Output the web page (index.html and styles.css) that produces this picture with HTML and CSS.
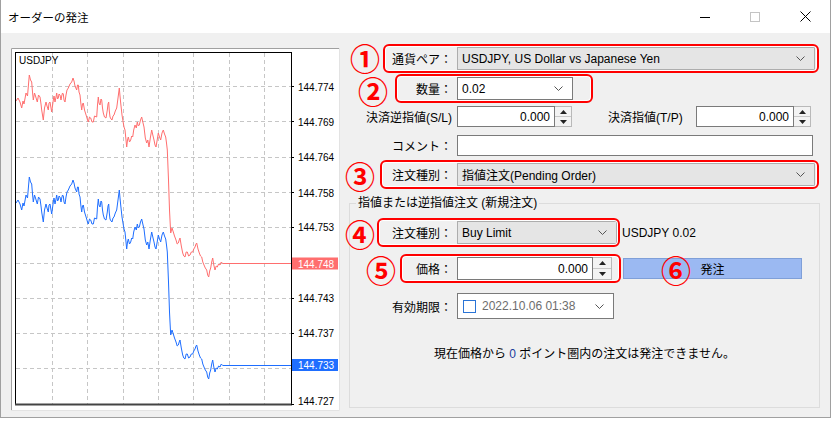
FILE: index.html
```html
<!DOCTYPE html>
<html lang="ja">
<head>
    <meta charset="UTF-8">
    <title>オーダーの発注</title>
    <link rel="stylesheet" href="styles.css">
</head>
<body>

<div class="window">
    <div class="titlebar">
        <span class="title">オーダーの発注</span>
        <div class="controls">
            <span class="ctl"><svg width="10" height="10"><line x1="0" y1="5.5" x2="10" y2="5.5" stroke="#000"/></svg></span>
            <span class="ctl"><svg width="10" height="10"><rect x="0.5" y="0.5" width="9" height="9" fill="none" stroke="#c4c4c4"/></svg></span>
            <span class="ctl"><svg width="11" height="11"><path d="M0.5 0.5 L10.5 10.5 M10.5 0.5 L0.5 10.5" stroke="#000" fill="none"/></svg></span>
        </div>
    </div>

    <div class="content">
        <!-- tick chart -->
        <div class="chart">
            <svg width="329" height="363" viewBox="11 48 329 363">
                <defs>
                    <polyline id="tick" fill="none" stroke-width="1" points="16,101 18,98 20,102 21.7,108 23,101 24,104 26,93 27.5,96 29.3,75 30.5,80 31.7,82 32.5,92 33.3,100 34.5,93 35.5,96 37.3,102 38.5,95 40,97 41,104 41.7,110 43.3,120 44.5,108 46,102 47,106 48.3,110 49,103 50,102 51,108 51.7,112 53.3,100 54,96 55,102 56,97 56.7,93 57.5,99 58.3,98 59,94 60,95 61,100 61.7,96 62.5,93 63.3,94 64,100 65,102 66,95 67,90 68.3,88 70,84 71.7,82 73,78 74,81 75,86 76.7,90 77.5,85 78.3,85 79,92 80,95 80.8,103 81.7,110 82.5,104 83.3,103 84.5,110 86.7,117 87.5,120 88.3,122 89.5,117 90.7,118 92,122 93.3,122 94.5,116 96.7,117 97.5,105 98.3,97 99,103 100,105 101,99 101.7,100 102.5,108 103.3,113 104.5,117 106,118 107.3,110 108,104 108.7,102 109.3,111 110,117 111,119 112,120 113,116 114,115 115.3,111 116.7,108 118,98 119.3,88 120,96 120.7,103 122,115 123.3,123 124,127 125,130 125.8,138 126.7,147 127.5,140 128.3,137 129.5,142 130.7,140 131.7,136 132.7,137 133.7,130 135,125 136.3,128 137.3,122 138.3,126 139.3,125 140.5,120 141.7,117 142.8,122 144,127 145.3,138 146.7,143 147.8,140 149,147 150.3,138 151.7,130 152.8,135 154,140 155,145 156,147 157.2,140 158.3,133 159.5,137 160.7,140 162,133 163.3,130 164.5,134 165.7,137 166.5,143 167.3,150 168.5,180 169.5,210 170,220 170.7,233 172,228 173.3,232 174.5,236 176,240 177.2,244 178.3,243 179.2,240 180,238 181.3,246 182.7,253 183.8,256 185,257 186.2,252 187.3,252 188.6,256 190,255 191.3,252 192.7,252 193.8,249 195,247 196,244 196.7,243 198,249 199.3,253 200.5,256 201.7,257 202.8,262 204,265 205.3,268 206.7,270 207.7,275 208.7,277 209.7,271 210.7,268 211.7,262 212.7,258 213.8,265 215,270 216.2,266 217.3,267 218.6,264 220,265 221.3,262 222.7,263.5 292,263.5"/>
                </defs>
                <rect x="11" y="48" width="329" height="363" fill="#fff"/>
                <path d="M11.5 411 V48.5 H340" stroke="#a0a0a0" fill="none"/>
                <path d="M339.5 48 V410.5 H11" stroke="#e3e3e3" fill="none"/>

                <g class="grid">
                    <line x1="52.5" y1="53" x2="52.5" y2="404"/>
                    <line x1="87.5" y1="53" x2="87.5" y2="404"/>
                    <line x1="123.5" y1="53" x2="123.5" y2="404"/>
                    <line x1="158.5" y1="53" x2="158.5" y2="404"/>
                    <line x1="193.5" y1="53" x2="193.5" y2="404"/>
                    <line x1="229.5" y1="53" x2="229.5" y2="404"/>
                    <line x1="264.5" y1="53" x2="264.5" y2="404"/>
                    <line x1="16" y1="86.5" x2="291" y2="86.5"/>
                    <line x1="16" y1="121.5" x2="291" y2="121.5"/>
                    <line x1="16" y1="157.5" x2="291" y2="157.5"/>
                    <line x1="16" y1="192.5" x2="291" y2="192.5"/>
                    <line x1="16" y1="227.5" x2="291" y2="227.5"/>
                    <line x1="16" y1="263.5" x2="291" y2="263.5"/>
                    <line x1="16" y1="298.5" x2="291" y2="298.5"/>
                    <line x1="16" y1="333.5" x2="291" y2="333.5"/>
                    <line x1="16" y1="368.5" x2="291" y2="368.5"/>
                </g>

                <use href="#tick" stroke="#ff6e6e"/>
                <use href="#tick" stroke="#1e6eff" transform="translate(0 102)"/>

                <rect x="15.5" y="52.5" width="276" height="352" fill="none" stroke="#000"/>
                <line x1="15" y1="404.5" x2="292" y2="404.5" stroke="#444" stroke-width="2"/>

                <g class="ticks">
                    <line x1="291" y1="86.5" x2="294" y2="86.5"/>
                    <line x1="291" y1="121.5" x2="294" y2="121.5"/>
                    <line x1="291" y1="157.5" x2="294" y2="157.5"/>
                    <line x1="291" y1="192.5" x2="294" y2="192.5"/>
                    <line x1="291" y1="227.5" x2="294" y2="227.5"/>
                    <line x1="291" y1="298.5" x2="294" y2="298.5"/>
                    <line x1="291" y1="333.5" x2="294" y2="333.5"/>
                    <line x1="291" y1="404.5" x2="294" y2="404.5"/>
                </g>

                <g class="axis">
                    <text x="19" y="64">USDJPY</text>
                    <text x="298" y="90.5">144.774</text>
                    <text x="298" y="125.5">144.769</text>
                    <text x="298" y="161">144.764</text>
                    <text x="298" y="196.5">144.758</text>
                    <text x="298" y="231">144.753</text>
                    <text x="298" y="302">144.743</text>
                    <text x="298" y="337">144.737</text>
                    <text x="298" y="405">144.727</text>
                </g>

                <rect x="292" y="257.5" width="46" height="12" fill="#ff6e6e"/>
                <text class="price-tag" x="298" y="267.5">144.748</text>
                <rect x="292" y="359" width="46" height="12" fill="#1e6eff"/>
                <text class="price-tag" x="298" y="369">144.733</text>
            </svg>
        </div>

        <!-- order form -->
        <div class="form">
            <div class="row row-1">
                <span class="label">通貨ペア：</span>
                <div class="combo combo-long">
                    <span>USDJPY, US Dollar vs Japanese Yen</span>
                    <svg class="chev" width="9" height="5"><polyline points="0.5,0.5 4.5,4.5 8.5,0.5" fill="none" stroke="#555"/></svg>
                </div>
                <span class="mark mark-1"></span>
                <span class="num num-1">①</span>
            </div>

            <div class="row row-2">
                <span class="label">数量：</span>
                <div class="combo combo-edit">
                    <span>0.02</span>
                    <svg class="chev" width="9" height="5"><polyline points="0.5,0.5 4.5,4.5 8.5,0.5" fill="none" stroke="#555"/></svg>
                </div>
                <span class="mark mark-2"></span>
                <span class="num num-2">②</span>
            </div>

            <div class="row row-3">
                <span class="label">決済逆指値(S/L)</span>
                <div class="field field-sl">0.000</div>
                <div class="spin">
                    <span><svg width="7" height="4"><polygon points="0,4 3.5,0 7,4" fill="#222"/></svg></span>
                    <span><svg width="7" height="4"><polygon points="0,0 3.5,4 7,0" fill="#222"/></svg></span>
                </div>
                <span class="label-tp">決済指値(T/P)</span>
                <div class="field field-sl">0.000</div>
                <div class="spin">
                    <span><svg width="7" height="4"><polygon points="0,4 3.5,0 7,4" fill="#222"/></svg></span>
                    <span><svg width="7" height="4"><polygon points="0,0 3.5,4 7,0" fill="#222"/></svg></span>
                </div>
            </div>

            <div class="row row-4">
                <span class="label">コメント：</span>
                <div class="field field-comment"></div>
            </div>

            <div class="row row-5">
                <span class="label">注文種別：</span>
                <div class="combo combo-long">
                    <span>指値注文(Pending Order)</span>
                    <svg class="chev" width="9" height="5"><polyline points="0.5,0.5 4.5,4.5 8.5,0.5" fill="none" stroke="#555"/></svg>
                </div>
                <span class="mark mark-3"></span>
                <span class="num num-3">③</span>
            </div>

            <fieldset class="group">
                <legend>指値または逆指値注文 (新規注文)</legend>

                <div class="row row-6">
                    <span class="label">注文種別：</span>
                    <div class="combo combo-type">
                        <span>Buy Limit</span>
                        <svg class="chev" width="9" height="5"><polyline points="0.5,0.5 4.5,4.5 8.5,0.5" fill="none" stroke="#555"/></svg>
                    </div>
                    <span class="symbol">USDJPY 0.02</span>
                    <span class="mark mark-4"></span>
                    <span class="num num-4">④</span>
                </div>

                <div class="row row-7">
                    <span class="label">価格：</span>
                    <div class="field field-price">0.000</div>
                    <div class="spin spin-tall">
                        <span><svg width="7" height="4"><polygon points="0,4 3.5,0 7,4" fill="#222"/></svg></span>
                        <span><svg width="7" height="4"><polygon points="0,0 3.5,4 7,0" fill="#222"/></svg></span>
                    </div>
                    <button class="order-btn">発注</button>
                    <span class="mark mark-5"></span>
                    <span class="num num-5">⑤</span>
                    <span class="num num-6">⑥</span>
                </div>

                <div class="row row-8">
                    <span class="label">有効期限：</span>
                    <div class="date">
                        <span class="check"></span>
                        <span class="date-text">2022.10.06 01:38</span>
                        <svg class="chev" width="9" height="5"><polyline points="0.5,0.5 4.5,4.5 8.5,0.5" fill="none" stroke="#555"/></svg>
                    </div>
                </div>

                <p class="message">現在価格から <span class="zero">0</span> ポイント圏内の注文は発注できません。</p>
            </fieldset>
        </div>
    </div>
</div>

</body>
</html>
```

FILE: styles.css
```css
* {
    box-sizing: border-box;
}
body {
    margin: 0;
    background-color: #fff;
    font-family: "Liberation Sans", "Noto Sans CJK JP", sans-serif;
    font-size: 12px;
    color: #000;
}
.window {
    width: 831px;
    height: 418px;
    background-color: #f0f0f0;
    border: 1px solid #a0a0a0;
    border-top: none;
    display: flex;
    flex-direction: column;
}
.titlebar {
    height: 33px;
    background-color: #fff;
    display: flex;
    align-items: center;
    padding-left: 7px;
    flex: none;
}
.title {
    flex: 1;
    font-family: "Noto Sans CJK JP", sans-serif;
    font-size: 11.5px;
}
.controls {
    display: flex;
    height: 100%;
}
.ctl {
    width: 50px;
    display: flex;
    align-items: center;
    justify-content: center;
}
.content {
    flex: 1;
    display: flex;
    padding: 14px 0 0 10px;
}
.chart {
    margin-top: 1px;
}
.chart svg {
    display: block;
}
.grid line {
    stroke: #c6c6c6;
    stroke-dasharray: 4 3;
}
.ticks line {
    stroke: #000;
}
.axis text, .price-tag {
    font-family: "Liberation Sans", sans-serif;
    font-size: 10px;
    fill: #000;
}
.price-tag {
    fill: #fff;
}

/* form */
.form {
    margin-left: 7px;
    width: 473px;
}
.row {
    position: relative;
    display: flex;
    align-items: center;
    height: 23px;
}
.row-2 { margin-top: 7px; }
.row-3 { margin-top: 6px; height: 21px; }
.row-4 { margin-top: 8px; height: 21px; }
.row-5 { margin-top: 7px; }
.label {
    width: 110px;
    padding-right: 5px;
    text-align: right;
    white-space: nowrap;
    flex: none;
}
.combo {
    display: flex;
    align-items: center;
    justify-content: space-between;
    height: 23px;
    padding: 0 9px 0 4px;
    background-color: #e5e5e5;
    border: 1px solid #adadad;
    white-space: nowrap;
}
.combo-long { width: 358px; }
.combo-edit {
    width: 116px;
    background-color: #fff;
    border-color: #7a7a7a;
}
.combo-type { width: 160px; }
.field {
    height: 21px;
    background-color: #fff;
    border: 1px solid #7a7a7a;
    padding: 0 4px;
    display: flex;
    align-items: center;
    justify-content: flex-end;
}
.field-sl { width: 98px; }
.field-comment { width: 356px; }
.field-price { width: 136px; height: 23px; }
.spin {
    width: 17px;
    height: 21px;
    display: flex;
    flex-direction: column;
    background-color: #f3f3f3;
    border: 1px solid #b9b9b9;
    border-left: none;
}
.spin span {
    flex: 1;
    display: flex;
    align-items: center;
    justify-content: center;
}
.spin span + span {
    border-top: 1px solid #c8c8c8;
}
.spin-tall {
    width: 19px;
    height: 23px;
}
.label-tp {
    margin-left: 36px;
    width: 88px;
    white-space: nowrap;
}
.group {
    margin: 9px 0 0 2px;
    padding: 10px 0 0 0;
    width: 471px;
    height: 213px;
    border: 1px solid #dcdcdc;
}
.group legend {
    margin-left: 6px;
    padding: 0 2px;
    line-height: 16px;
}
.group .label {
    width: 107px;
}
.row-7 { margin-top: 13px; }
.row-8 { margin-top: 13px; height: 26px; }
.symbol {
    margin-left: 5px;
}
.order-btn {
    margin: 0 0 0 11px;
    width: 179px;
    height: 21px;
    padding: 0;
    background-color: #9bb9f2;
    border: 1px solid #7f9fd8;
    font-family: "Liberation Sans", "Noto Sans CJK JP", sans-serif;
    font-size: 12px;
    color: #000;
}
.date {
    width: 157px;
    height: 26px;
    display: flex;
    align-items: center;
    padding: 0 9px 0 5px;
    background-color: #fff;
    border: 1px solid #7a7a7a;
}
.check {
    width: 13px;
    height: 13px;
    border: 1px solid #2a74d6;
    margin-right: 6px;
    flex: none;
}
.date-text {
    width: 95px;
    overflow: hidden;
    white-space: nowrap;
    color: #6d6d6d;
}
.date .chev {
    margin-left: auto;
}
.message {
    margin: 27px 0 0 0;
    line-height: 16px;
    text-align: center;
}
.zero {
    color: #1a3c9c;
}

/* red annotation marks drawn over the dialog */
.mark {
    position: absolute;
    top: -3px;
    height: 29px;
    border: 2px solid #f00;
    border-radius: 6px;
    box-shadow: inset 0 0 0 1px #fff;
}
.mark-1 { left: 36px; width: 436px; }
.mark-2 { left: 48px; width: 198px; }
.mark-3 { left: 33px; width: 439px; }
.mark-4 { left: 27px; width: 243px; }
.mark-5 { left: 50px; width: 221px; }
.num {
    position: absolute;
    top: 50%;
    height: 24px;
    margin-top: -12px;
    font-family: "Noto Sans CJK JP", sans-serif;
    font-size: 30px;
    font-weight: 700;
    line-height: 24px;
    color: #f00;
}
.num-1 { left: 3px; margin-top: -14px; }
.num-2 { left: 11px; margin-top: -11px; }
.num-3 { left: -2px; }
.num-4 { left: -5px; }
.num-5 { left: 16px; }
.num-6 { left: 311px; }
```
